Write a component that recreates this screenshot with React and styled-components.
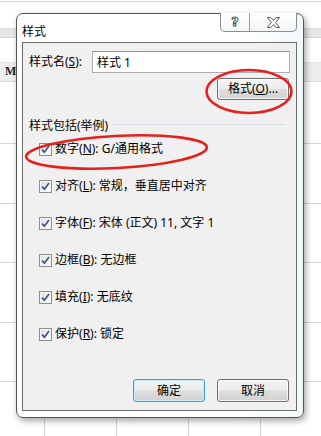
import React from 'react';
import styled, { createGlobalStyle } from 'styled-components';

const GlobalStyle = createGlobalStyle`
  html, body {
    margin: 0;
    padding: 0;
    background: #fff;
  }
  body {
    font-family: "Noto Sans", "Noto Sans CJK SC", sans-serif;
    font-size: 12px;
    color: #000;
  }
`;

// spreadsheet behind the dialog
const Sheet = styled.div`
  position: relative;
  width: 321px;
  height: 436px;
  overflow: hidden;
  box-sizing: border-box;
  padding: 61px 0 0 5px;
  background-color: #fff;
  background-image:
    linear-gradient(to right,
      transparent 44px, #d4d4d4 44px, #d4d4d4 45px, transparent 45px,
      transparent 116px, #d4d4d4 116px, #d4d4d4 117px, transparent 117px,
      transparent 188px, #d4d4d4 188px, #d4d4d4 189px, transparent 189px,
      transparent 260px, #d4d4d4 260px, #d4d4d4 261px, transparent 261px),
    linear-gradient(to bottom,
      transparent 1px, #d9d9d9 1px, #d9d9d9 2px, transparent 2px,
      transparent 28px, #d6d6d6 28px, #e6e6e6 29px, #e6e6e6 37px, #d6d6d6 37px, #d6d6d6 38px, transparent 38px,
      transparent 62px, #dadada 62px, #eeeeee 63px, #eeeeee 81px, #dadada 81px, #dadada 82px, transparent 82px,
      transparent 143px, #d8d8d8 143px, #d8d8d8 144px, transparent 144px,
      transparent 203px, #d8d8d8 203px, #d8d8d8 204px, transparent 204px,
      transparent 262px, #d8d8d8 262px, #d8d8d8 263px, transparent 263px,
      transparent 322px, #d8d8d8 322px, #d8d8d8 323px, transparent 323px,
      transparent 381px, #d8d8d8 381px, #d8d8d8 382px, transparent 382px);
  background-size: 100% 20px, 100% 100%;
  background-position: 0 419px, 0 0;
  background-repeat: no-repeat;
`;

const ColHead = styled.span`
  display: block;
  font-family: "Liberation Serif", serif;
  font-weight: bold;
  font-size: 12px;
  line-height: 20px;
  color: #222;
`;

const Window = styled.div`
  position: absolute;
  left: 16px;
  top: 13px;
  width: 288px;
  height: 405px;
  box-sizing: border-box;
  border: 1px solid #555;
  border-radius: 7px;
  background: linear-gradient(to right, #ffffff 75%, #f1f9fb);
  box-shadow: 2px 3px 6px rgba(0, 0, 0, 0.35);
  display: flex;
  flex-direction: column;
  padding: 0 6px 6px 5px;
`;

const TitleBar = styled.div`
  height: 28px;
  display: flex;
  align-items: flex-start;
`;

const Title = styled.span`
  font-family: "Noto Sans CJK SC", sans-serif;
  line-height: 16px;
  margin-top: 9px;
`;

const Caption = styled.div`
  margin-left: auto;
  margin-top: -1px;
  display: flex;
  height: 18px;
  border: 1px solid #8c8c8c;
  border-top: none;
  border-radius: 0 0 5px 5px;
  overflow: hidden;
  background: linear-gradient(to bottom, #ffffff, #f3f5f6);
`;

const CapBtn = styled.div`
  width: ${p => p.$w}px;
  display: flex;
  align-items: center;
  justify-content: center;
  & + & {
    border-left: 1px solid #9a9a9a;
  }
`;

const HelpGlyph = styled.span`
  font-family: "DejaVu Sans", sans-serif;
  font-weight: bold;
  font-size: 13px;
  line-height: 14px;
  color: #fff;
  -webkit-text-stroke: 1px #555;
`;

const Client = styled.div`
  flex: 1;
  display: flex;
  flex-direction: column;
  border: 1px solid #6e6e6e;
  background: #f0f0f0;
  padding: 8px 6px 8px 6px;
`;

const NameRow = styled.div`
  display: flex;
  align-items: center;
  height: 22px;
`;

const Label = styled.span`
  width: 63px;
  flex: none;
  line-height: 16px;
  white-space: nowrap;
`;

const Field = styled.div`
  flex: 1;
  height: 22px;
  box-sizing: border-box;
  border: 1px solid #abadb3;
  border-top-color: #8f9296;
  background: #fff;
  padding-left: 4px;
  display: flex;
  align-items: center;
`;

const Button = styled.div`
  width: 72px;
  height: ${p => p.$h || 23}px;
  box-sizing: border-box;
  border: 1px solid ${p => (p.$default ? '#3a9ddc' : '#707070')};
  border-radius: 3px;
  background: linear-gradient(to bottom, #f4f4f4 0%, #ececec 48%, #dedede 52%, #d2d2d2 100%);
  box-shadow: inset 0 0 0 1px ${p => (p.$default ? '#c9ecfc' : 'rgba(255,255,255,0.75)')};
  display: flex;
  align-items: center;
  justify-content: center;
  line-height: 16px;
  white-space: nowrap;
`;

const FormatRow = styled.div`
  display: flex;
  justify-content: flex-end;
  margin-top: 5px;
  padding-right: 1px;
`;

const GroupHead = styled.div`
  display: flex;
  align-items: center;
  margin-top: 18px;
  line-height: 16px;
`;

const GroupLine = styled.div`
  flex: 1;
  height: 1px;
  background: #d5dfe5;
  margin: 0 5px 3px 4px;
`;

const List = styled.div`
  display: flex;
  flex-direction: column;
  gap: 21px;
  margin-top: 7px;
  padding-left: 10px;
`;

const Row = styled.div`
  display: flex;
  align-items: center;
  gap: 3px;
  height: 16px;
  line-height: 16px;
  white-space: nowrap;
`;

const Box = styled.span`
  width: 13px;
  height: 13px;
  flex: none;
  box-sizing: border-box;
  border: 1px solid #8e8f8f;
  background: linear-gradient(135deg, #d9dbde 0%, #f4f5f6 60%, #ffffff 100%);
  box-shadow: inset 0 0 0 1px #f4f4f4;
  display: flex;
  align-items: center;
  justify-content: center;
`;

const Footer = styled.div`
  margin-top: auto;
  display: flex;
  justify-content: flex-end;
  gap: 12px;
  padding-right: 1px;
`;

const Mark = styled.u`
  text-underline-offset: 1px;
`;

const Overlay = styled.svg`
  position: absolute;
  left: 0;
  top: 0;
  pointer-events: none;
`;

const Check = () => (
  <svg width="9" height="9" viewBox="0 0 9 9">
    <path d="M1 4.6 L3.4 7.2 L8 1" fill="none" stroke="#3f5389" strokeWidth="1.7" />
  </svg>
);

const CloseIcon = () => (
  <svg width="15" height="11" viewBox="0 0 15 11">
    <path
      d="M1.5 0.5 H4.8 L7.5 3.4 L10.2 0.5 H13.5 L9.6 5.5 L13.5 10.5 H10.2 L7.5 7.6 L4.8 10.5 H1.5 L5.4 5.5 Z"
      fill="#fff"
      stroke="#5a5a5a"
      strokeWidth="1"
      strokeLinejoin="round"
    />
  </svg>
);

const items = [
  ['数字', 'N', 'G/通用格式'],
  ['对齐', 'L', '常规，垂直居中对齐'],
  ['字体', 'F', '宋体 (正文) 11, 文字 1'],
  ['边框', 'B', '无边框'],
  ['填充', 'I', '无底纹'],
  ['保护', 'R', '锁定'],
];

export default function App() {
  return (
    <>
      <GlobalStyle />
      <Sheet>
        <ColHead>M</ColHead>
        <Window>
          <TitleBar>
            <Title>样式</Title>
            <Caption>
              <CapBtn $w={28}>
                <HelpGlyph>?</HelpGlyph>
              </CapBtn>
              <CapBtn $w={46}>
                <CloseIcon />
              </CapBtn>
            </Caption>
          </TitleBar>
          <Client>
            <NameRow>
              <Label>
                样式名(<Mark>S</Mark>):
              </Label>
              <Field>样式 1</Field>
            </NameRow>
            <FormatRow>
              <Button $h={22}>
                格式(<Mark>O</Mark>)...
              </Button>
            </FormatRow>
            <GroupHead>
              <span>样式包括(举例)</span>
              <GroupLine />
            </GroupHead>
            <List>
              {items.map(([name, key, value]) => (
                <Row key={key}>
                  <Box>
                    <Check />
                  </Box>
                  <span>
                    {name}(<Mark>{key}</Mark>): {value}
                  </span>
                </Row>
              ))}
            </List>
            <Footer>
              <Button $default>确定</Button>
              <Button>取消</Button>
            </Footer>
          </Client>
        </Window>
        <Overlay width="321" height="436">
          <ellipse cx="249" cy="91.5" rx="42.5" ry="21.5" fill="none" stroke="#e5211d" strokeWidth="2.6" />
          <ellipse
            cx="116.5"
            cy="152"
            rx="90.5"
            ry="16"
            transform="rotate(-3 116.5 152)"
            fill="none"
            stroke="#e5211d"
            strokeWidth="2.6"
          />
        </Overlay>
      </Sheet>
    </>
  );
}
